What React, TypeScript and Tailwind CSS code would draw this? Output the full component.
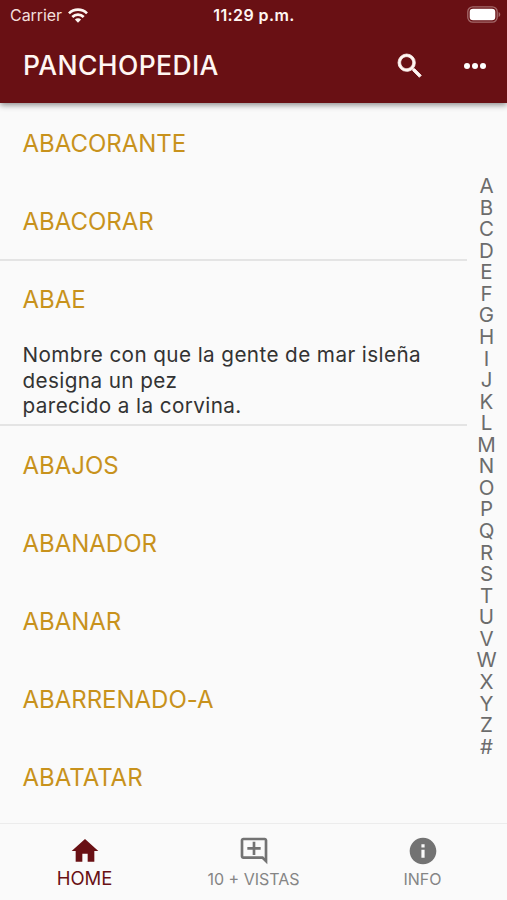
import { useState } from 'react'

interface Entry {
  word: string
  meaning?: string[]
}

const ENTRIES: Entry[] = [
  { word: 'ABACORANTE' },
  { word: 'ABACORAR' },
  {
    word: 'ABAE',
    meaning: ['Nombre con que la gente de mar isleña designa un pez', 'parecido a la corvina.'],
  },
  { word: 'ABAJOS' },
  { word: 'ABANADOR' },
  { word: 'ABANAR' },
  { word: 'ABARRENADO-A' },
  { word: 'ABATATAR' },
]

const LETTERS = 'ABCDEFGHIJKLMNOPQRSTUVWXYZ#'.split('')

const TABS = [
  { label: 'HOME', icon: 'M10 20v-6h4v6h5v-8h3L12 3 2 12h3v8z' },
  {
    label: '10 + VISTAS',
    icon: 'M22 4c0-1.1-.9-2-2-2H4c-1.1 0-2 .9-2 2v12c0 1.1.9 2 2 2h14l4 4V4zm-2 13.17L18.83 16H4V4h16v13.17zM13 5h-2v4H7v2h4v4h2v-4h4V9h-4z',
  },
  {
    label: 'INFO',
    icon: 'M12 2C6.48 2 2 6.48 2 12s4.48 10 10 10 10-4.48 10-10S17.52 2 12 2zm1.2 15h-2.4v-6h2.4v6zm0-7.7h-2.4V6.9h2.4v2.4z',
  },
]

function Icon({ path, className }: { path: string; className?: string }) {
  return (
    <svg viewBox="0 0 24 24" fill="currentColor" className={className}>
      <path d={path} />
    </svg>
  )
}

function StatusBar() {
  return (
    <div className="grid grid-cols-3 items-center h-[30px] pl-[10px] pr-[6px]">
      <div className="flex items-center gap-[6px]">
        <span className="text-[16px] tracking-[-0.05px] text-[#f3dfdb]">Carrier</span>
        <svg viewBox="0 0 20 15" fill="none" stroke="currentColor" strokeWidth="2.7" className="w-5 h-[15px]">
          <path d="M1 5.4a12.8 12.8 0 0 1 18 0" />
          <path d="M4.3 9a8.1 8.1 0 0 1 11.4 0" />
          <path d="M10 14.8 6.9 11.6a4.4 4.4 0 0 1 6.2 0z" fill="currentColor" stroke="none" />
        </svg>
      </div>
      <span className="-ml-[3px] text-center text-[16px] font-semibold tracking-[0.4px] whitespace-nowrap">11:29 p.m.</span>
      <svg viewBox="0 0 34 17" className="w-[34px] h-[17px] -mt-[2px] justify-self-end">
        <rect x="0.8" y="0.8" width="29.4" height="15.4" rx="5" fill="none" stroke="#a4696a" strokeWidth="1.3" />
        <rect x="2.7" y="2.7" width="25.6" height="11.6" rx="3.3" fill="#fff" />
        <path d="M31.6 6v5c2.2-.8 2.2-4.2 0-5z" fill="#a4696a" />
      </svg>
    </div>
  )
}

export default function App() {
  const [activeTab, setActiveTab] = useState('HOME')

  return (
    <div className="flex flex-col w-[507px] h-[900px] overflow-hidden bg-[#fafafa] font-['Inter',sans-serif]">
      <header className="relative z-10 shrink-0 h-[103px] bg-[#691014] text-[#fff6f2] shadow-[0_2px_6px_rgba(0,0,0,0.45)]">
        <StatusBar />
        <div className="flex items-center h-[71px] pl-[23px] pr-[17px]">
          <h1 className="flex-1 text-[26.5px] font-medium tracking-[0.4px]">PANCHOPEDIA</h1>
          <button type="button" className="mr-[34px]">
            <Icon
              className="size-8 stroke-current stroke-[0.6]"
              path="M15.5 14h-.79l-.28-.27A6.471 6.471 0 0 0 16 9.5 6.5 6.5 0 1 0 9.5 16c1.61 0 3.09-.59 4.23-1.57l.27.28v.79l5 4.99L20.49 19l-4.99-5zm-6 0C7.01 14 5 11.99 5 9.5S7.01 5 9.5 5 14 7.01 14 9.5 11.99 14 9.5 14z"
            />
          </button>
          <button type="button" className="flex gap-[2px] px-1">
            <span className="size-[6px] rounded-full bg-white" />
            <span className="size-[6px] rounded-full bg-white" />
            <span className="size-[6px] rounded-full bg-white" />
          </button>
        </div>
      </header>

      <main className="flex flex-1 min-h-0">
        <ul className="w-[467px] pt-[1.5px]">
          {ENTRIES.map((entry) => (
            <li key={entry.word} className={entry.meaning ? 'border-y-2 border-[#e4e4e4] -mt-[1.5px]' : ''}>
              <h2
                className={`flex items-center h-[78px] pl-[22.5px] text-[24px] tracking-[-0.02px] text-[#c8921c] ${entry.meaning ? '' : 'pt-px'}`}
              >
                {entry.word}
              </h2>
              {entry.meaning && (
                <div className="h-[85px] pl-[22.5px] pr-5 pt-[3px] text-[20.7px] leading-[25.7px] tracking-[0.4px] text-[#333]">
                  {entry.meaning.map((line) => (
                    <p key={line}>{line}</p>
                  ))}
                </div>
              )}
            </li>
          ))}
        </ul>
        <nav className="flex flex-col items-center w-[39px] pt-[72px] text-[20.5px] leading-[21.57px] text-[#6c6c6c]">
          {LETTERS.map((letter) => (
            <span key={letter}>{letter}</span>
          ))}
        </nav>
      </main>

      <footer className="grid grid-cols-3 shrink-0 h-[77px] border-t border-[#ececec]">
        {TABS.map((tab) => {
          const active = tab.label === activeTab
          return (
            <button
              key={tab.label}
              type="button"
              onClick={() => setActiveTab(tab.label)}
              className={`flex flex-col items-center pt-[11px] ${active ? 'text-[#691014]' : 'text-[#737373]'}`}
            >
              <Icon path={tab.icon} className="size-8" />
              <span
                className={
                  active
                    ? 'text-[18.5px] leading-[23px] tracking-[-0.1px]'
                    : 'text-[16px] leading-[25px] text-[#858585]'
                }
              >
                {tab.label}
              </span>
            </button>
          )
        })}
      </footer>
    </div>
  )
}
